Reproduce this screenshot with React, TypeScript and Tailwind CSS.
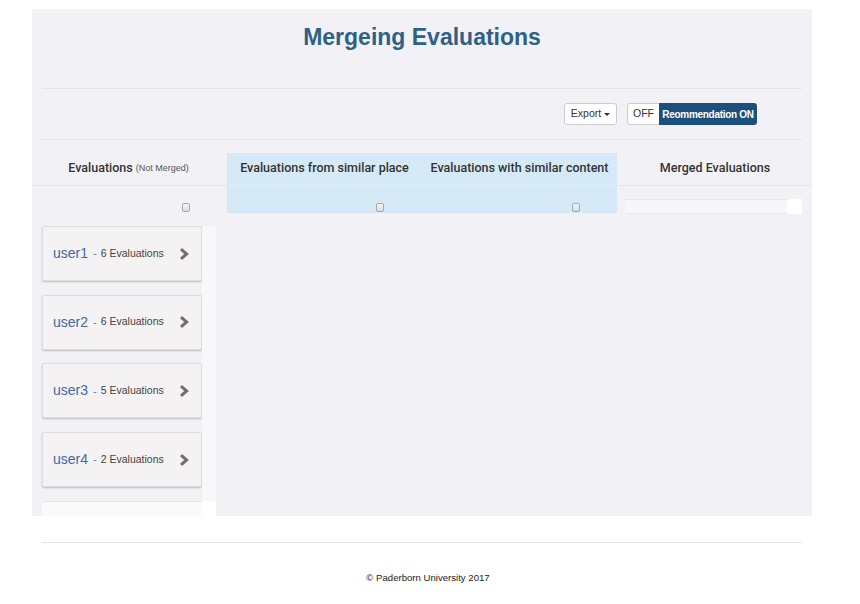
import React from "react";

function Check() {
  return (
    <span className="inline-block w-[8px] h-[9px] rounded-[2px] border border-[#a8a8a8] bg-gradient-to-b from-[#f6f6f6] to-[#dcdcdc]" />
  );
}

function Chevron() {
  return (
    <svg width="10" height="12" viewBox="0 0 10 12">
      <path d="M2 1.2 L7.6 6 L2 10.8" fill="none" stroke="#6f6f6f" strokeWidth="3" strokeLinejoin="miter" />
    </svg>
  );
}

const users = [
  { name: "user1", n: 6 },
  { name: "user2", n: 6 },
  { name: "user3", n: 5 },
  { name: "user4", n: 2 },
];

export default function App() {
  return (
    <div className="min-h-[604px] bg-white font-['Liberation_Sans',Arial,sans-serif] text-[#333]">
      <div className="pt-[9px]">
        <div className="ml-[32px] w-[780px] h-[507px] bg-[#f2f2f6] px-[10px] flex flex-col">
          <h1 className="pt-[14px] h-[40px] text-center text-[23px] font-bold leading-[28px] text-[#2d6187]">
            Mergeing Evaluations
          </h1>
          <div className="mt-[39px] border-t border-[#e3e3e9]" />
          <div className="flex justify-end items-center gap-[10px] pt-[14px] pb-[14px] pr-[45px]">
            <button className="h-[22px] w-[53px] bg-white border border-[#ccc] rounded-[3px] text-[10.5px] text-[#333] flex items-center justify-center gap-[3px]">
              Export
              <span className="inline-block w-0 h-0 border-l-[3px] border-r-[3px] border-t-[3px] border-l-transparent border-r-transparent border-t-[#333] mt-[1px]" />
            </button>
            <div className="flex h-[22px] rounded-[3px] overflow-hidden">
              <span className="w-[32px] bg-white border border-[#ccc] border-r-0 rounded-l-[3px] text-[10.5px] flex items-center justify-center text-[#333]">OFF</span>
              <span className="w-[98px] bg-[#1d4f7c] text-white text-[10px] font-bold flex items-center justify-center tracking-[-0.3px]">Reommendation ON</span>
            </div>
          </div>
          <div className="border-t border-[#e3e3e9]" />

          <div className="mt-[13px] -mx-[10px] px-[10px]">
            <div className="grid grid-cols-[185px_195px_195px_1fr]">
              <div className="h-[33px] flex items-center justify-center gap-[3px] border-b border-[#e3e3e9] -ml-[10px] pl-[10px] pr-[12px]">
                <span className="text-[12.5px] font-['Roboto'] font-medium text-[#333] -mt-[2px]">Evaluations</span>
                <span className="text-[9px] text-[#555]">(Not Merged)</span>
              </div>
              <div className="h-[33px] flex items-center justify-center bg-[#d5e9f6] border-b border-[#e2eff9] text-[12.5px] font-['Roboto'] font-medium text-[#333] pb-[2px]">
                Evaluations from similar place
              </div>
              <div className="h-[33px] flex items-center justify-center bg-[#d5e9f6] border-b border-[#e2eff9] text-[12.5px] font-['Roboto'] font-medium text-[#333] pb-[2px]">
                Evaluations with similar content
              </div>
              <div className="h-[33px] flex items-center justify-center border-b border-[#e3e3e9] -mr-[10px] pr-[10px] pl-[11px] text-[12.5px] font-['Roboto'] font-medium text-[#333] pb-[2px]">
                Merged Evaluations
              </div>

              <div className="h-[27px] flex items-end justify-end pb-[1px] pr-[37px]">
                <Check />
              </div>
              <div className="h-[27px] flex items-end justify-end pb-[1px] pr-[38px] bg-[#d5e9f6]">
                <Check />
              </div>
              <div className="h-[27px] flex items-end justify-end pb-[1px] pr-[37px] bg-[#d5e9f6]">
                <Check />
              </div>
              <div className="h-[27px] flex items-end pl-[9px]">
                <div className="flex w-full h-[15px] mb-[-1px]">
                  <div className="flex-1 bg-[#f7f7f8] border-t border-b border-[#e8e8ec]" />
                  <div className="w-[15px] bg-white" />
                </div>
              </div>
            </div>
          </div>

          <div className="mt-[13px] flex flex-1 min-h-0">
            <div className="w-[174px] flex flex-col">
              <div className="flex flex-1">
                <div className="w-[160px] flex flex-col gap-[13.7px]">
                  {users.map((u) => (
                    <div
                      key={u.name}
                      className="h-[55px] bg-[#f4f2f2] border border-[#dedddd] shadow-[0_1px_2px_rgba(0,0,0,0.22)] rounded-[2px] flex items-center pl-[10px] pr-[12px]"
                    >
                      <span className="text-[14px] text-[#3f6aa3] font-light">{u.name}</span>
                      <span className="text-[11px] text-[#5a7ca8] ml-[5px]">-</span>
                      <span className="text-[10.5px] text-[#444] ml-[4px]">{u.n} Evaluations</span>
                      <span className="ml-auto flex items-center">
                        <Chevron />
                      </span>
                    </div>
                  ))}
                </div>
                <div className="w-[14px] bg-[#f8f8f9]" />
              </div>
              <div className="flex h-[15px]">
                <div className="w-[160px] bg-[#fafafa] border-t border-[#e6e6ea]" />
                <div className="w-[14px] bg-white" />
              </div>
            </div>
          </div>
        </div>
      </div>

      <div className="ml-[42px] w-[760px] mt-[26px] border-t border-[#e5e5e5]" />
      <div className="text-center text-[9.6px] text-[#222] mt-[28px] pr-[4px]">© Paderborn University 2017</div>
    </div>
  );
}
